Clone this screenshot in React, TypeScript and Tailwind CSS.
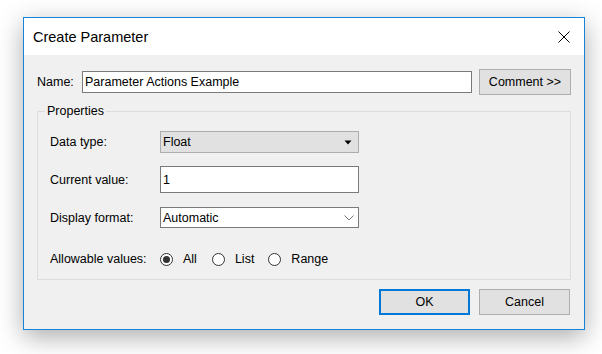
import React from 'react';

const Radio: React.FC<{ label: string; checked?: boolean; className?: string }> = ({ label, checked, className }) => {
    return (
        <label className={`flex items-center ${className ?? ''}`}>
            <span className="w-[13px] h-[13px] rounded-full border border-[#333333] bg-white flex items-center justify-center">
                {checked && <span className="w-[7px] h-[7px] rounded-full bg-[#333333]" />}
            </span>
            <span className="ml-[10px]">{label}</span>
        </label>
    );
};

const Row: React.FC<{ label: string; className?: string; children: React.ReactNode }> = ({ label, className, children }) => {
    return (
        <div className={`flex items-center ${className ?? ''}`}>
            <span className="w-[110px] shrink-0">{label}</span>
            {children}
        </div>
    );
};

const App: React.FC = () => {
    return (
        <div
            className="w-[602px] h-[354px] bg-white pl-[23px] pt-[17px] text-[12.5px] leading-[16px] text-black"
            style={{ fontFamily: '"Liberation Sans", Arial, sans-serif' }}
        >
            <div className="w-[562px] h-[313px] border border-[#1883d7] bg-[#f0f0f0] flex flex-col shadow-[0_7px_24px_rgba(0,0,0,0.33)]">
                {/* title bar */}
                <div className="h-[37px] bg-white flex items-center justify-between pl-[9px] pr-[14px]">
                    <span className="text-[14.5px] leading-[20px]">Create Parameter</span>
                    <svg width="12" height="12" viewBox="0 0 12 12" className="text-black">
                        <path d="M0.5 0.5 L11.5 11.5 M11.5 0.5 L0.5 11.5" stroke="currentColor" strokeWidth="1" />
                    </svg>
                </div>

                <div className="flex-1 px-[13px] pt-[14px]">
                    {/* name row */}
                    <div className="flex items-center h-[26px]">
                        <span className="w-[45px] shrink-0">Name:</span>
                        <div className="w-[390px] h-[22px] border border-[#7a7a7a] bg-white flex items-center pl-[2px]">
                            Parameter Actions Example
                        </div>
                        <button className="ml-[7px] w-[92px] h-[26px] border border-[#adadad] bg-[#e1e1e1] flex items-center justify-center">
                            Comment &gt;&gt;
                        </button>
                    </div>

                    {/* properties group */}
                    <fieldset className="mt-[8px] border border-[#dcdcdc] pl-[12px] pt-[12px] pb-[10px]">
                        <legend className="ml-[-5px] px-[2px] leading-[16px]">Properties</legend>

                        <Row label="Data type:">
                            <div className="w-[199px] h-[22px] border border-[#adadad] bg-[#e1e1e1] flex items-center justify-between pl-[2px] pr-[6px]">
                                <span>Float</span>
                                <svg width="8" height="5" viewBox="0 0 8 5">
                                    <path d="M0.5 0.5 H7.5 L4 4.5 Z" fill="#000" />
                                </svg>
                            </div>
                        </Row>

                        <Row label="Current value:" className="mt-[13px]">
                            <div className="w-[199px] h-[27px] border border-[#7a7a7a] bg-white flex items-center pl-[2px]">1</div>
                        </Row>

                        <Row label="Display format:" className="mt-[14px]">
                            <div className="w-[199px] h-[21px] border border-[#7a7a7a] bg-white flex items-center justify-between pl-[2px] pr-[4px]">
                                <span>Automatic</span>
                                <svg width="10" height="6" viewBox="0 0 10 6">
                                    <path d="M0.5 0.5 L5 5 L9.5 0.5" fill="none" stroke="#666" strokeWidth="0.9" />
                                </svg>
                            </div>
                        </Row>

                        <Row label="Allowable values:" className="mt-[21px] h-[20px]">
                            <Radio label="All" checked />
                            <Radio label="List" className="ml-[15px]" />
                            <Radio label="Range" className="ml-[14px]" />
                        </Row>
                    </fieldset>

                    {/* buttons */}
                    <div className="flex justify-end gap-[9px] mt-[9px] mr-[1px]">
                        <button className="w-[91px] h-[26px] border-2 border-[#0078d7] bg-[#e1e1e1] flex items-center justify-center">
                            OK
                        </button>
                        <button className="w-[91px] h-[26px] border border-[#adadad] bg-[#e1e1e1] flex items-center justify-center">
                            Cancel
                        </button>
                    </div>
                </div>
            </div>
        </div>
    );
};

export default App;
